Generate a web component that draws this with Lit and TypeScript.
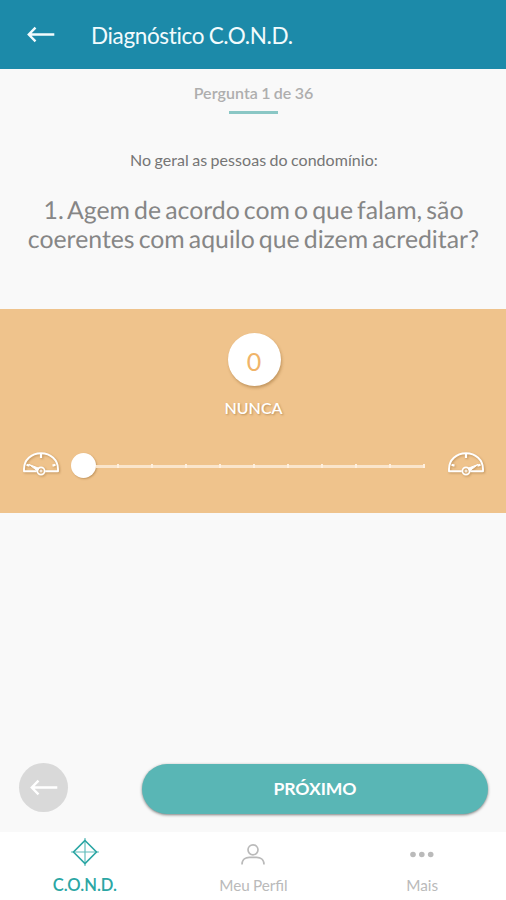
import { LitElement, html, css, svg } from "lit";
import { customElement, property, state } from "lit/decorators.js";
import { classMap } from "lit/directives/class-map.js";

@customElement("gauge-icon")
class GaugeIcon extends LitElement {
  @property({ type: Boolean }) high = false;
  static styles = css`
    :host { display: block; width: 38px; height: 28px; }
    svg { display: block; overflow: visible; filter: drop-shadow(1px 1px 1px rgba(120, 75, 20, 0.4)); }
  `;
  render() {
    const needle = this.high
      ? svg`<path d="M21 17.3 31 13.4 22.5 20Z" fill="#fff" stroke-width="1" />`
      : svg`<path d="M17 17.3 7 13.4 15.5 20Z" fill="#fff" stroke-width="1" />`;
    return html`<svg width="38" height="28" viewBox="0 0 38 28" fill="none" stroke="#fff" stroke-width="1.9" stroke-linejoin="round">
      <path d="M14.8 20.3H2V18C2 9 9.2 2.3 19 2.3S36 9 36 18v2.3H23.2" />
      <circle cx="19" cy="20" r="3.6" stroke-width="1.7" />
      <circle cx="19" cy="20" r="1" stroke-width="1" />
      <path d="M19 3v4M4.5 13.8l3 .8M33.5 13.8l-3 .8" stroke-width="2.2" />
      ${needle}
    </svg>`;
  }
}

@customElement("app-root")
class AppRoot extends LitElement {
  @state() private value = 0;
  private labels = ["NUNCA"];
  private tabs = [
    { id: "cond", label: "C.O.N.D." },
    { id: "perfil", label: "Meu Perfil" },
    { id: "mais", label: "Mais" },
  ];

  static styles = css`
    :host { display: flex; flex-direction: column; height: 900px; background: #f9f9f9; font-family: Lato, "Open Sans", sans-serif; color: #868686; overflow: hidden; word-spacing: -0.05em; }
    * { box-sizing: border-box; }
    svg { display: block; flex: none; }
    header { height: 69px; flex: none; background: #1c8aa9; color: #f2fbfd; display: flex; align-items: center; padding: 0 0 0 27px; gap: 36px; }
    .title { font-size: 22.5px; line-height: 28px; white-space: nowrap; letter-spacing: -0.36px; padding-top: 3px; }
    .intro { height: 240px; flex: none; display: flex; flex-direction: column; align-items: center; text-align: center; white-space: nowrap; }
    .count { margin: 14px 0 0 1px; font-size: 16px; line-height: 20px; font-weight: 600; color: #aeaeae; letter-spacing: 0.06px; }
    .mark { width: 49px; height: 3px; margin-top: 8px; background: #8ac7c5; }
    .lead { margin: 36px 0 0 2px; font-size: 16px; line-height: 20px; color: #757575; letter-spacing: 0.05px; }
    .question { margin: 26px 0 0 1px; font-size: 24.8px; line-height: 29px; word-spacing: -0.09em; text-rendering: geometricPrecision; }
    .panel { height: 204px; flex: none; background: #efc38c; display: flex; flex-direction: column; align-items: center; color: #fff; }
    .score { width: 53px; height: 53px; margin: 24px 0 0 2px; border-radius: 50%; background: #fff; color: #f0b469; display: flex; align-items: center; justify-content: center; font-size: 25px; padding-top: 2px; box-shadow: 1px 2px 3px rgba(130, 85, 30, 0.4); }
    .level { margin: 12px 0 0 1px; font-size: 16px; line-height: 20px; font-weight: 600; text-shadow: 1px 1px 2px rgba(130, 85, 30, 0.45); }
    .scale { align-self: stretch; margin-top: 32px; padding: 0 21px 0 22px; height: 30px; display: flex; align-items: center; }
    .track { flex: 1; height: 26px; margin: 0 22px 0 11px; display: flex; align-items: center; }
    .knob { flex: none; width: 25px; height: 25px; border-radius: 50%; background: #fff; box-shadow: 1px 1px 2px rgba(130, 85, 30, 0.4); }
    .rail { flex: 1; height: 3px; margin-top: 2px; background: #fae5cb; display: flex; align-items: center; padding-left: 21px; justify-content: space-between; }
    .tick { width: 2px; height: 4px; background: #fff0de; }
    .actions { flex: 1; display: flex; align-items: flex-end; padding: 0 18px 18px 19px; gap: 74px; }
    .back { flex: none; width: 49px; height: 49px; border: 0; padding: 0; margin-bottom: 2px; border-radius: 50%; background: #d9d9d9; color: #fff; display: flex; align-items: center; justify-content: center; }
    .next { flex: 1; height: 50px; border: 0; border-radius: 25px; background: #59b6b5; color: #fff; font: 700 17.6px/22px Lato, sans-serif; letter-spacing: -0.1px; box-shadow: 0 1px 3px rgba(0, 0, 0, 0.5); }
    nav { height: 68px; flex: none; background: #fff; display: grid; grid-template-columns: repeat(3, 1fr); }
    .tab { display: flex; flex-direction: column; align-items: center; color: #bababa; font-size: 15.3px; line-height: 20px; padding: 6px 0 0 1px; }
    .tab svg { margin-bottom: 9px; }
    .active { color: #2ba6a4; font-size: 16.6px; font-weight: 600; }
  `;

  private arrow() {
    return svg`<svg width="28" height="18" viewBox="0 0 28 18" fill="none" stroke="currentColor" stroke-width="2.4"><path d="M27.3 8.5H2M8.5 1.7 1.8 8.5l6.7 6.8" /></svg>`;
  }

  private icon(id: string) {
    if (id === "cond")
      return svg`<svg width="28" height="28" viewBox="0 0 28 28" fill="none" stroke="currentColor"><path d="M14 2.5 25.5 14 14 25.5 2.5 14Z" stroke-width="1.6"/><path d="M14 0v28M0 14h28" stroke-width="1.2" opacity=".75"/></svg>`;
    if (id === "perfil")
      return svg`<svg width="28" height="28" viewBox="0 0 28 28" fill="none" stroke="currentColor" stroke-width="1.7"><circle cx="14" cy="11.8" r="5"/><path d="M3 26.5c0-5.5 4-7.2 7.3-7.2h7.4c3.3 0 7.3 1.7 7.3 7.2"/></svg>`;
    return svg`<svg width="28" height="28" viewBox="0 0 28 28" fill="currentColor"><circle cx="5" cy="16.5" r="2.8"/><circle cx="13.8" cy="16.5" r="2.8"/><circle cx="22.7" cy="16.5" r="2.8"/></svg>`;
  }

  render() {
    return html`
      <header>${this.arrow()}<div class="title">Diagnóstico C.O.N.D.</div></header>
      <section class="intro">
        <div class="count">Pergunta 1 de 36</div>
        <div class="mark"></div>
        <div class="lead">No geral as pessoas do condomínio:</div>
        <div class="question">1. Agem de acordo com o que falam, são<br />coerentes com aquilo que dizem acreditar?</div>
      </section>
      <section class="panel">
        <div class="score">${this.value}</div>
        <div class="level">${this.labels[this.value]}</div>
        <div class="scale">
          <gauge-icon></gauge-icon>
          <div class="track">
            <div class="knob"></div>
            <div class="rail">${Array.from({ length: 10 }, () => html`<span class="tick"></span>`)}</div>
          </div>
          <gauge-icon high></gauge-icon>
        </div>
      </section>
      <section class="actions">
        <button class="back" aria-label="Voltar">${this.arrow()}</button>
        <button class="next">PRÓXIMO</button>
      </section>
      <nav>
        ${this.tabs.map((t) => html`<div class=${classMap({ tab: true, active: t.id === "cond" })}>${this.icon(t.id)}<span>${t.label}</span></div>`)}
      </nav>
    `;
  }
}
